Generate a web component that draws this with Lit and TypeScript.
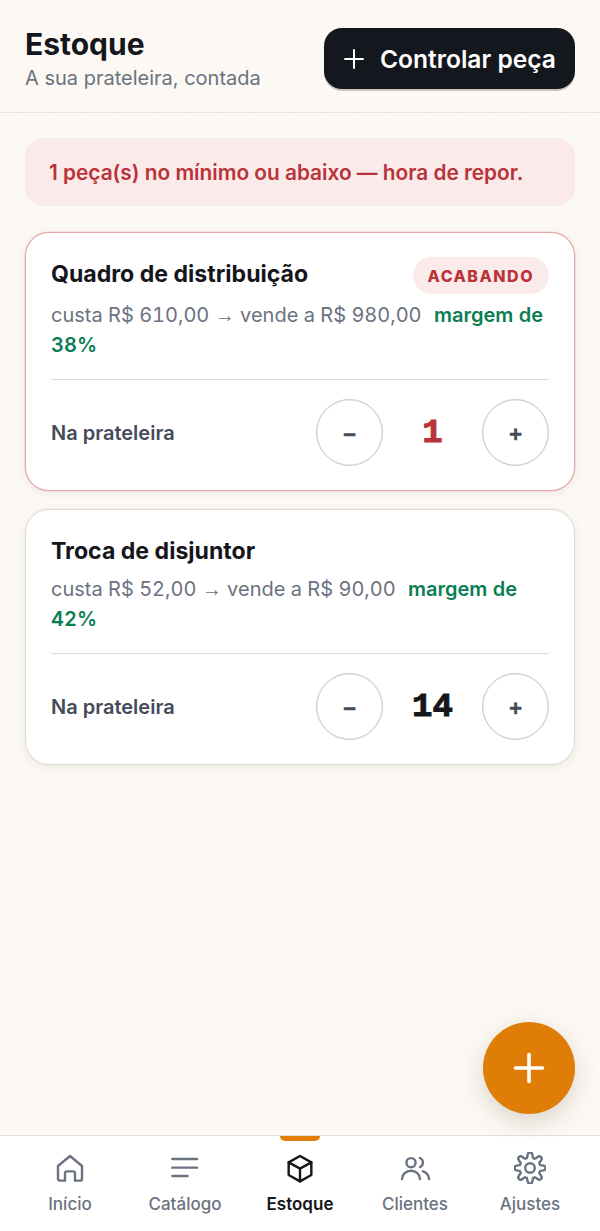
import { LitElement, html, css, svg } from "lit";
import { customElement } from "lit/decorators.js";

// contorno da engrenagem de 8 dentes, calculado
function gearPath() {
  const pts: string[] = [];
  for (let i = 0; i < 144; i++) {
    const a = (i / 144) * Math.PI * 2;
    const wave = Math.max(-1, Math.min(1, 1.5 * Math.cos(8 * a)));
    const r = 9.7 + 1.9 * wave;
    const x = 12 + r * Math.sin(a);
    const y = 12 - r * Math.cos(a);
    pts.push(`${x.toFixed(2)} ${y.toFixed(2)}`);
  }
  return `M${pts.join("L")}Z`;
}

const tabs = [
  { label: "Início", icon: svg`<path d="M3 10.500 12 3l9 7.500V20a1.500 1.500 0 0 1-1.500 1.500h-3.750v-5.500a1.500 1.500 0 0 0-1.500-1.500h-4.500a1.500 1.500 0 0 0-1.500 1.500v5.500H4.500A1.500 1.500 0 0 1 3 20z"/>` },
  { label: "Catálogo", icon: svg`<path d="M2.500 5.250h18.500M2.500 11.750h18.500M2.500 18h11.500"/>` },
  { label: "Estoque", active: true, icon: svg`<path d="M12 3l8.500 4.750v9.500L12 22l-8.500-4.750v-9.500z"/><path d="M3.500 7.750 12 12.500l8.500-4.750M12 12.500V22"/>` },
  { label: "Clientes", icon: svg`<circle cx="9" cy="8" r="3.400"/><path d="M2.250 20.250a6.750 6.200 0 0 1 13.500 0M15.750 4.500a3.700 3.700 0 0 1 0 6.750M18 14.500a6.500 6.500 0 0 1 4.500 5.750"/>` },
  { label: "Ajustes", icon: svg`<circle cx="12" cy="12" r="3.600"/><path d=${gearPath()}/>` },
];

const items = [
  { name: "Quadro de distribuição", cost: "610,00", sale: "980,00", margin: "38%", qty: 1, low: true },
  { name: "Troca de disjuntor", cost: "52,00", sale: "90,00", margin: "42%", qty: 14, low: false },
];

@customElement("app-root")
export class AppRoot extends LitElement {
  static styles = css`
    :host {
      display: block;
      position: relative;
      height: 1231px;
      overflow: hidden;
      font-family: Inter, "Liberation Sans", sans-serif;
      color: #14161b;
      background-color: #fcf9f4;
      background-image: radial-gradient(#f6f2ec 1px, transparent 1.2px);
      background-size: 34px 34px;
    }
    .page {
      display: flex;
      flex-direction: column;
      height: 100%;
    }
    header {
      display: flex;
      align-items: center;
      justify-content: space-between;
      height: 113px;
      padding: 5px 25px 0;
      box-sizing: border-box;
      border-bottom: 1px solid #e9e6df;
    }
    h1 {
      margin: 0;
      font-size: 30px;
      line-height: 34px;
      font-weight: 700;
    }
    .sub {
      margin-top: 5px;
      font-size: 20px;
      line-height: 24px;
      color: #6b7280;
    }
    .primary {
      display: flex;
      align-items: center;
      gap: 14px;
      height: 61px;
      padding: 0 19px 0 18px;
      box-sizing: border-box;
      border: 0;
      border-radius: 18px;
      background: #14171d;
      color: #fff;
      font: 600 24.6px Inter, sans-serif;
      box-shadow: 0 2px 0 #c9c6bf;
    }
    main {
      flex: 1;
      display: flex;
      flex-direction: column;
      gap: 18px;
      padding: 25px 25px 0;
    }
    .alert {
      height: 68px;
      margin-bottom: 8px;
      display: flex;
      align-items: center;
      padding: 0 24px;
      border-radius: 18px;
      background: #fbeaea;
      color: #b93338;
      font-size: 20.8px;
      font-weight: 600;
    }
    .card {
      padding: 24px 25px;
      border: 1px solid #e2ded5;
      border-radius: 24px;
      background: #fff;
      box-shadow: 0 0 0 0.5px #ece9e2, 0 2px 8px rgba(60, 50, 30, 0.08);
    }
    .card.low {
      border-color: #e6a5a8;
      box-shadow: 0 0 0 0.5px #f0c6c8, 0 2px 8px rgba(60, 50, 30, 0.08);
    }
    .top {
      display: flex;
      justify-content: space-between;
      align-items: flex-start;
    }
    h2 {
      margin: 0;
      font-size: 23.1px;
      line-height: 34px;
      font-weight: 700;
    }
    .badge {
      padding: 0 15px;
      height: 37px;
      display: flex;
      align-items: center;
      border-radius: 19px;
      background: #fbeaea;
      color: #b93338;
      font-size: 16px;
      font-weight: 800;
      letter-spacing: 1.5px;
    }
    .prices {
      margin-top: 6px;
      font-size: 20px;
      line-height: 30px;
      color: #6b7280;
      font-variant-numeric: tabular-nums;
    }
    .arrow {
      font-family: "Liberation Sans", sans-serif;
      font-size: 20px;
    }
    .margin {
      margin-left: 7px;
      color: #0b7d53;
      font-weight: 600;
    }
    .row {
      display: flex;
      align-items: center;
      justify-content: space-between;
      margin-top: 19px;
      padding-top: 19px;
      border-top: 1px solid #e2ded5;
    }
    .label {
      font-size: 20px;
      font-weight: 600;
      color: #454b59;
    }
    .stepper {
      display: flex;
      align-items: center;
    }
    .step {
      width: 67px;
      height: 67px;
      border: 1px solid #cdc9bf;
      border-radius: 50%;
      background: #fff;
      color: #454b59;
      font: 700 22px "Liberation Mono", monospace;
      -webkit-text-stroke: 0.5px currentColor;
      padding: 8px 0 0;
      box-shadow: inset 0 0 0 0.5px #e4e1d9;
    }
    .qty {
      width: 99px;
      text-align: center;
      font: 700 34px "Liberation Mono", monospace;
      -webkit-text-stroke: 1px currentColor;
    }
    .qty.low {
      color: #b93338;
    }
    .fab {
      position: absolute;
      right: 25px;
      bottom: 117px;
      width: 92px;
      height: 92px;
      padding: 0;
      border: 0;
      border-radius: 50%;
      background: #e07d06;
      display: flex;
      align-items: center;
      justify-content: center;
      box-shadow: 0 8px 24px rgba(60, 50, 30, 0.18);
    }
    nav {
      position: relative;
      display: grid;
      grid-template-columns: repeat(5, 1fr);
      height: 96px;
      padding: 0 12.5px;
      box-sizing: border-box;
      background: #fff;
      border-top: 1px solid #e4e1da;
    }
    .tab {
      position: relative;
      display: flex;
      flex-direction: column;
      align-items: center;
      padding-top: 16px;
      font-size: 17px;
      font-weight: 500;
      color: #6b7280;
    }
    .tab svg {
      width: 32px;
      height: 32px;
      fill: none;
      stroke: currentColor;
      stroke-width: 1.8;
      stroke-linecap: round;
      stroke-linejoin: round;
      margin-bottom: 10px;
    }
    .tab.active {
      color: #14161b;
      font-weight: 600;
    }
    .tab.active::before {
      content: "";
      position: absolute;
      top: 0;
      left: 50%;
      width: 40px;
      height: 5px;
      margin-left: -20px;
      border-radius: 0 0 6px 6px;
      background: #e07d06;
    }
  `;

  plus(size: number, color: string, width: number) {
    return html`<svg width=${size} height=${size} viewBox="0 0 24 24" fill="none" stroke=${color} stroke-width=${width} stroke-linecap="round"><path d="M12 3v18M3 12h18"/></svg>`;
  }

  renderCard(item: (typeof items)[number]) {
    return html`
      <section class="card ${item.low ? "low" : ""}">
        <div class="top">
          <h2>${item.name}</h2>
          ${item.low ? html`<span class="badge">ACABANDO</span>` : ""}
        </div>
        <div class="prices">
          custa R$ ${item.cost} <span class="arrow">→</span> vende a R$ ${item.sale} <span class="margin">margem de ${item.margin}</span>
        </div>
        <div class="row">
          <span class="label">Na prateleira</span>
          <div class="stepper">
            <button class="step">−</button>
            <span class="qty ${item.low ? "low" : ""}">${item.qty}</span>
            <button class="step">+</button>
          </div>
        </div>
      </section>
    `;
  }

  render() {
    return html`
      <div class="page">
        <header>
          <div>
            <h1>Estoque</h1>
            <div class="sub">A sua prateleira, contada</div>
          </div>
          <button class="primary">${this.plus(24, "#fff", 2)}Controlar peça</button>
        </header>
        <main>
          <div class="alert">1 peça(s) no mínimo ou abaixo — hora de repor.</div>
          ${items.map((item) => this.renderCard(item))}
        </main>
        <nav>
          ${tabs.map(
            (tab) => html`
              <div class="tab ${tab.active ? "active" : ""}">
                <svg viewBox="0 0 24 24">${tab.icon}</svg>
                ${tab.label}
              </div>
            `
          )}
        </nav>
      </div>
      <button class="fab">${this.plus(36, "#fff", 2.4)}</button>
    `;
  }
}
